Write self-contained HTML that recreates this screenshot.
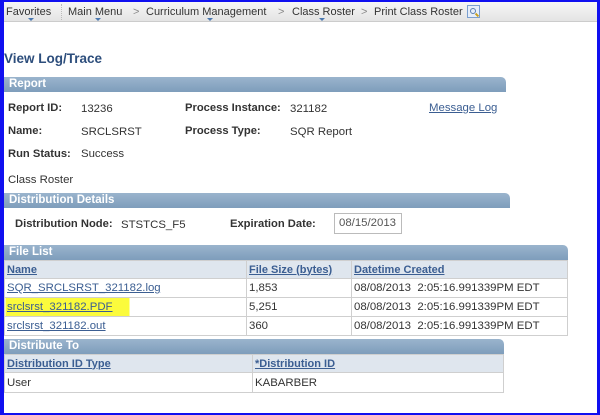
<!DOCTYPE html>
<html><head><style>
*{margin:0;padding:0;box-sizing:border-box}
body{width:600px;height:415px;overflow:hidden;background:#fff;font-family:"Liberation Sans",Arial,sans-serif;font-size:11.4px;color:#333}
#frame{position:absolute;left:0;top:0;width:600px;height:415px;border:solid #1010f0;border-width:2px 3px 2px 4px}
.a{position:absolute;white-space:nowrap}
#nav{position:absolute;left:4px;top:2px;width:593px;height:20px;background:linear-gradient(#f6f6f6,#e4e4e4);border-bottom:1px solid #ccc}
.nv{position:absolute;top:4px;font-size:11px;color:#333}
.car{position:absolute;top:16px;width:0;height:0;border-left:3px solid transparent;border-right:3px solid transparent;border-top:3px solid #4a78b0}
.bar{position:absolute;left:4px;height:15px;background:linear-gradient(#9ab4cd,#7e9dbb);border-radius:0 5px 0 0;color:#fff;font-weight:bold;font-size:11.5px;padding:1px 0 0 5px}
.lb{font-weight:bold;color:#333;font-size:11.2px}
.lk{color:#3b5e92;text-decoration:underline}
.hd{font-weight:bold;color:#3b5e92;text-decoration:underline;font-size:11px}
table{position:absolute;border-collapse:collapse;font-size:11.4px}
td{border:1px solid #cfcfcf;padding:0 2px;height:19px;white-space:nowrap}
tr.h td{background:#dfe6ee;height:18px}
</style></head><body>
<div id="nav">
<span class="nv" style="left:2px">Favorites</span>
<div class="car" style="left:24px"></div>
<div style="position:absolute;left:57px;top:2px;height:16px;border-left:1px dotted #bbb"></div>
<span class="nv" style="left:64px">Main Menu</span>
<div class="car" style="left:91px"></div>
<span class="nv" style="left:129px;color:#888">&gt;</span>
<span class="nv" style="left:142px">Curriculum Management</span>
<div class="car" style="left:203px"></div>
<span class="nv" style="left:274px;color:#888">&gt;</span>
<span class="nv" style="left:288px">Class Roster</span>
<div class="car" style="left:315px"></div>
<span class="nv" style="left:357px;color:#888">&gt;</span>
<span class="nv" style="left:370px">Print Class Roster</span>
<div style="position:absolute;left:463px;top:3px;width:13px;height:13px;border:1px solid #7a9fd0;background:#e6eefa"><div style="position:absolute;left:2px;top:2px;width:6px;height:6px;border:1px solid #5a7fb0;border-radius:50%"></div><div style="position:absolute;left:7px;top:8px;width:4px;height:2px;background:#c8a020;transform:rotate(45deg)"></div></div>
</div>
<div class="a" style="left:4px;top:51px;font-size:13.5px;font-weight:bold;color:#2d4e7c">View Log/Trace</div>

<div class="bar" style="top:77px;width:502px">Report</div>
<div class="a lb" style="left:8px;top:102px">Report ID:</div>
<div class="a" style="left:81px;top:103px">13236</div>
<div class="a lb" style="left:185px;top:102px">Process Instance:</div>
<div class="a" style="left:290px;top:103px">321182</div>
<div class="a lk" style="left:429px;top:102px">Message Log</div>
<div class="a lb" style="left:8px;top:125px">Name:</div>
<div class="a" style="left:81px;top:126px">SRCLSRST</div>
<div class="a lb" style="left:185px;top:125px">Process Type:</div>
<div class="a" style="left:290px;top:126px">SQR Report</div>
<div class="a lb" style="left:8px;top:148px">Run Status:</div>
<div class="a" style="left:81px;top:148px">Success</div>
<div class="a" style="left:8px;top:174px">Class Roster</div>

<div class="bar" style="top:193px;width:506px">Distribution Details</div>
<div class="a lb" style="left:15px;top:218px">Distribution Node:</div>
<div class="a" style="left:121px;top:219px">STSTCS_F5</div>
<div class="a lb" style="left:230px;top:218px">Expiration Date:</div>
<div class="a" style="left:334px;top:213px;width:68px;height:21px;border:1px solid #bbb;color:#555;padding:3px 0 0 4px">08/15/2013</div>

<div class="bar" style="top:245px;width:564px">File List</div>
<table style="left:4px;top:260px;width:564px">
<tr class="h"><td style="width:242px"><span class="hd">Name</span></td><td style="width:105px"><span class="hd">File Size (bytes)</span></td><td><span class="hd">Datetime Created</span></td></tr>
<tr><td><span class="lk">SQR_SRCLSRST_321182.log</span></td><td>1,853</td><td>08/08/2013&nbsp; 2:05:16.991339PM EDT</td></tr>
<tr><td style="background:linear-gradient(90deg,#fbfb3c 0,#fbfb3c 124px,#fff 124px)"><span class="lk">srclsrst_321182.PDF</span></td><td>5,251</td><td>08/08/2013&nbsp; 2:05:16.991339PM EDT</td></tr>
<tr><td><span class="lk">srclsrst_321182.out</span></td><td>360</td><td>08/08/2013&nbsp; 2:05:16.991339PM EDT</td></tr>
</table>

<div class="bar" style="top:339px;width:500px">Distribute To</div>
<table style="left:4px;top:354px;width:500px">
<tr class="h"><td style="width:248px"><span class="hd">Distribution ID Type</span></td><td><span class="hd">*Distribution ID</span></td></tr>
<tr><td style="height:20px">User</td><td>KABARBER</td></tr>
</table>
<div id="frame"></div>
</body></html>
